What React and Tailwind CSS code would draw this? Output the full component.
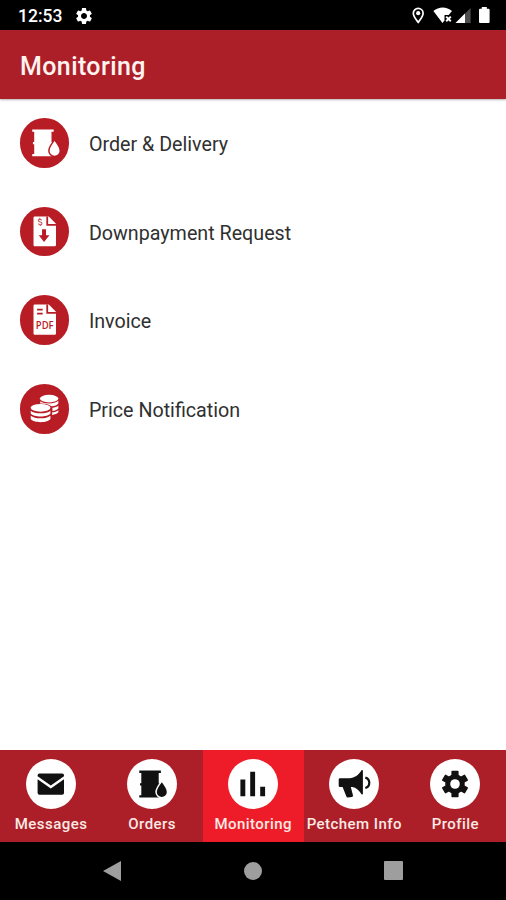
import { MdSettings } from 'react-icons/md'

const BarrelIcon = ({ gap }) => (
  <svg viewBox="0 0 50 50" className="w-full h-full">
    <path
      fill="currentColor"
      d="M12.3 11.5h21.6v2.4h-2.2v10.3h1v2.2h-1v9.9h1v2.3H12.3v-2.3h2v-9.9h-1.3v-2.2h1.3V13.9h-2z"
    />
    <path
      fill="currentColor"
      className={gap}
      strokeWidth="3"
      paintOrder="stroke"
      d="M34.8 23.2c2 3.1 5 6.4 5 9.7a5 5 0 0 1-10 0c0-3.3 3-6.6 5-9.7z"
    />
  </svg>
)

const DownpaymentIcon = () => (
  <svg viewBox="0 0 50 50" className="w-full h-full">
    <path fill="#fff" d="M14.8 9.5H29l7.2 7.3v21.5q0 1.3-1.3 1.3H14.8q-1.2 0-1.2-1.3V10.8q0-1.3 1.2-1.3z" />
    <path fill="none" stroke="#b81c25" strokeWidth="1.8" d="M27.4 9.5v8.4h8.8" />
    <path fill="#b81c25" d="M22.2 22.5h4v6h3.4l-5.4 6.8-5.3-6.8h3.3z" />
    <text x="17.6" y="18.4" fontSize="9" fill="#b81c25" transform="rotate(-8 20 15)" className="font-[Roboto,sans-serif]">
      $
    </text>
  </svg>
)

const InvoiceIcon = () => (
  <svg viewBox="0 0 50 50" className="w-full h-full">
    <path fill="#fff" d="M14.8 9.5H29l7.2 7.3v21.9q0 1.3-1.3 1.3H14.8q-1.2 0-1.2-1.3V10.8q0-1.3 1.2-1.3z" />
    <path fill="none" stroke="#b81c25" strokeWidth="1.8" d="M27.4 9.5v8.4h8.8M17.2 14.8h5.6M17.2 18.7h5.6" />
    <text
      x="24.9"
      y="33.8"
      fontSize="10.5"
      fontWeight="600"
      textAnchor="middle"
      textLength="18"
      lengthAdjust="spacingAndGlyphs"
      fill="#b81c25"
      className="font-[Open_Sans,sans-serif]"
    >
      PDF
    </text>
  </svg>
)

const CoinsIcon = () => (
  <svg viewBox="0 0 50 50" className="w-full h-full" fill="#fff">
    <ellipse cx="29.3" cy="14.7" rx="9.3" ry="3.8" />
    <path d="M20.4 17.3c4 3 14 3 18.2-.4v2.4c-.8 1.8-3.8 2.9-7 3.2-2.8-2.3-7-2.9-11.2-2.8z" />
    <path d="M32.6 23.9c2.4-.3 4.6-1 6-2.1v2.5c-.9 1.4-3.2 2.4-5.9 2.8z" />
    <path d="M32.4 28.5c2.4-.3 4.8-1 6.2-2.2v2.2c-1.2 1.5-3.6 2.3-6.3 2.6z" />
    <ellipse cx="20.7" cy="23.9" rx="10" ry="3.9" />
    <path d="M10.8 26.9c4 3.5 16 3.5 19.8 0v2.9c-2.7 4-17 4-19.8 0z" />
    <path d="M10.8 31.9c4 3.4 16 3.4 19.8 0v3.4c-2.7 4.2-17 4.2-19.8 0z" />
  </svg>
)

const MailIcon = () => (
  <svg viewBox="0 0 50 50" className="w-full h-full" fill="currentColor">
    <path d="M13.4 14.4h22.8q1.8 0 1.8 1.8v1L24.8 26.5 11.6 17.2v-1q0-1.8 1.8-1.8z" />
    <path d="m11.6 20.2 13.2 9.2L38 20.2v13.7q0 1.8-1.8 1.8H13.4q-1.8 0-1.8-1.8z" />
  </svg>
)

const BarsIcon = () => (
  <svg viewBox="0 0 50 50" className="w-full h-full" fill="currentColor">
    <path d="M12.4 20.4h4.9v16.9h-4.9zM22.2 12.8h4.9v24.5h-4.9zM32.2 27.8h4.9v9.5h-4.9z" />
  </svg>
)

const MegaphoneIcon = () => (
  <svg viewBox="0 0 50 50" className="w-full h-full" fill="currentColor">
    <path d="M11 19.2h9.5c5 0 9.3-3.2 12.2-8.1q1.2-.5 1.2.8v22.6q0 1.2-1.2.9c-2.3-4-5.6-6.8-9.4-7.4h-1.5l2.2 8.6q0 1.1-1 1.3l-4.2.6q-1.2 0-1.5-1.2L13.6 28H11q-1.3 0-1.3-1.3v-6.2q0-1.3 1.3-1.3z" />
    <path fill="none" stroke="currentColor" strokeWidth="2.2" d="M36.3 18.6c5.3 1.3 5.3 9.2 0 10.4" />
  </svg>
)

const GearIcon = () => (
  <svg viewBox="0 0 50 50" className="w-full h-full" fill="currentColor">
    <circle cx="25" cy="25" r="9.8" />
    <rect x="21.4" y="11.7" width="7.2" height="26.6" rx="0.8" />
    <rect x="21.4" y="11.7" width="7.2" height="26.6" rx="0.8" transform="rotate(60 25 25)" />
    <rect x="21.4" y="11.7" width="7.2" height="26.6" rx="0.8" transform="rotate(120 25 25)" />
    <circle cx="25" cy="25" r="4.8" fill="#fff" />
  </svg>
)

const items = [
  { label: 'Order & Delivery', icon: <BarrelIcon gap="stroke-[#b81c25]" /> },
  { label: 'Downpayment Request', icon: <DownpaymentIcon /> },
  { label: 'Invoice', icon: <InvoiceIcon /> },
  { label: 'Price Notification', icon: <CoinsIcon /> },
]

const tabs = [
  { label: 'Messages', icon: <MailIcon /> },
  { label: 'Orders', icon: <BarrelIcon gap="stroke-white" /> },
  { label: 'Monitoring', icon: <BarsIcon />, active: true },
  { label: 'Petchem Info', icon: <MegaphoneIcon /> },
  { label: 'Profile', icon: <GearIcon /> },
]

const StatusBar = () => (
  <div className="flex h-[30px] shrink-0 items-center bg-black pl-[18px] pr-4 pt-px text-white">
    <span className="w-[56px] pt-0.5 text-[17.5px] font-medium leading-none">12:53</span>
    <MdSettings className="size-[20px]" />
    <svg viewBox="0 0 78 18" className="ml-auto h-[18px] w-[78px]" fill="currentColor">
      <path
        fill="none"
        stroke="currentColor"
        strokeWidth="1.7"
        d="M6.2 1.4a4.9 4.9 0 0 1 4.9 4.9c0 3.2-3 6.6-4.9 9-1.9-2.4-4.9-5.8-4.9-9a4.9 4.9 0 0 1 4.9-4.9z"
      />
      <circle cx="6.2" cy="6.2" r="2.1" />
      <path d="M21.4 4c5.3-4.7 13.3-4.7 18.6 0l-3.3 4h-4.2v5.4l-2 2.5z" />
      <path stroke="currentColor" strokeWidth="2" d="m34.2 9.6 4.6 4.6M38.8 9.6l-4.6 4.6" />
      <path opacity=".3" d="M58.6 1v15H43.5z" />
      <path d="M53 6.6V16h-9.5z" />
      <path d="M69.8 0h5v1.8h1.8q1 0 1 1V15q0 1.1-1 1.1H68q-1 0-1-1.1V2.8q0-1 1-1h1.8z" />
    </svg>
  </div>
)

const App = () => {
  return (
    <div className="flex h-[900px] w-[506px] flex-col overflow-hidden bg-white font-[Roboto,sans-serif]">
      <StatusBar />

      <header className="flex h-[68.5px] shrink-0 items-center bg-[#ad1f28] pl-5 pt-1 shadow-[0_1px_2px_rgba(0,0,0,0.3)]">
        <h1 className="text-[25px] font-medium tracking-[0.4px] text-[#fff3f0]">Monitoring</h1>
      </header>

      <main className="flex-1 pt-[19.5px]">
        <ul className="flex flex-col gap-[39px]">
          {items.map(({ label, icon }) => (
            <li key={label} className="flex items-center pl-[19.7px]">
              <div className="size-[49.7px] rounded-full bg-[#b81c25] text-white">{icon}</div>
              <span className="ml-[19.5px] pt-1 text-[19.7px] text-[#303030]">{label}</span>
            </li>
          ))}
        </ul>
      </main>

      <nav className="grid h-[92px] shrink-0 grid-cols-5 bg-[#ad1f28] pl-[0.5px]">
        {tabs.map(({ label, icon, active }) => (
          <div key={label} className={`flex flex-col items-center pt-[9px] ${active ? 'bg-[#ee1c29]' : ''}`}>
            <div className="size-[50px] rounded-full bg-white text-[#111]">{icon}</div>
            <span className="mt-[5px] whitespace-nowrap text-[15px] font-medium leading-5 tracking-[0.45px] text-[#fbe9e4]">
              {label}
            </span>
          </div>
        ))}
      </nav>

      <footer className="flex h-[58.5px] shrink-0 items-center justify-between bg-black pl-[103px] pr-[103px]">
        <svg viewBox="0 0 18 20" className="h-5 w-[18px]" fill="#9e9e9e">
          <path d="M0 10 18 0v20z" />
        </svg>
        <div className="size-[18px] rounded-full bg-[#9e9e9e]" />
        <div className="size-[19px] rounded-[1px] bg-[#9e9e9e]" />
      </footer>
    </div>
  )
}

export default App
